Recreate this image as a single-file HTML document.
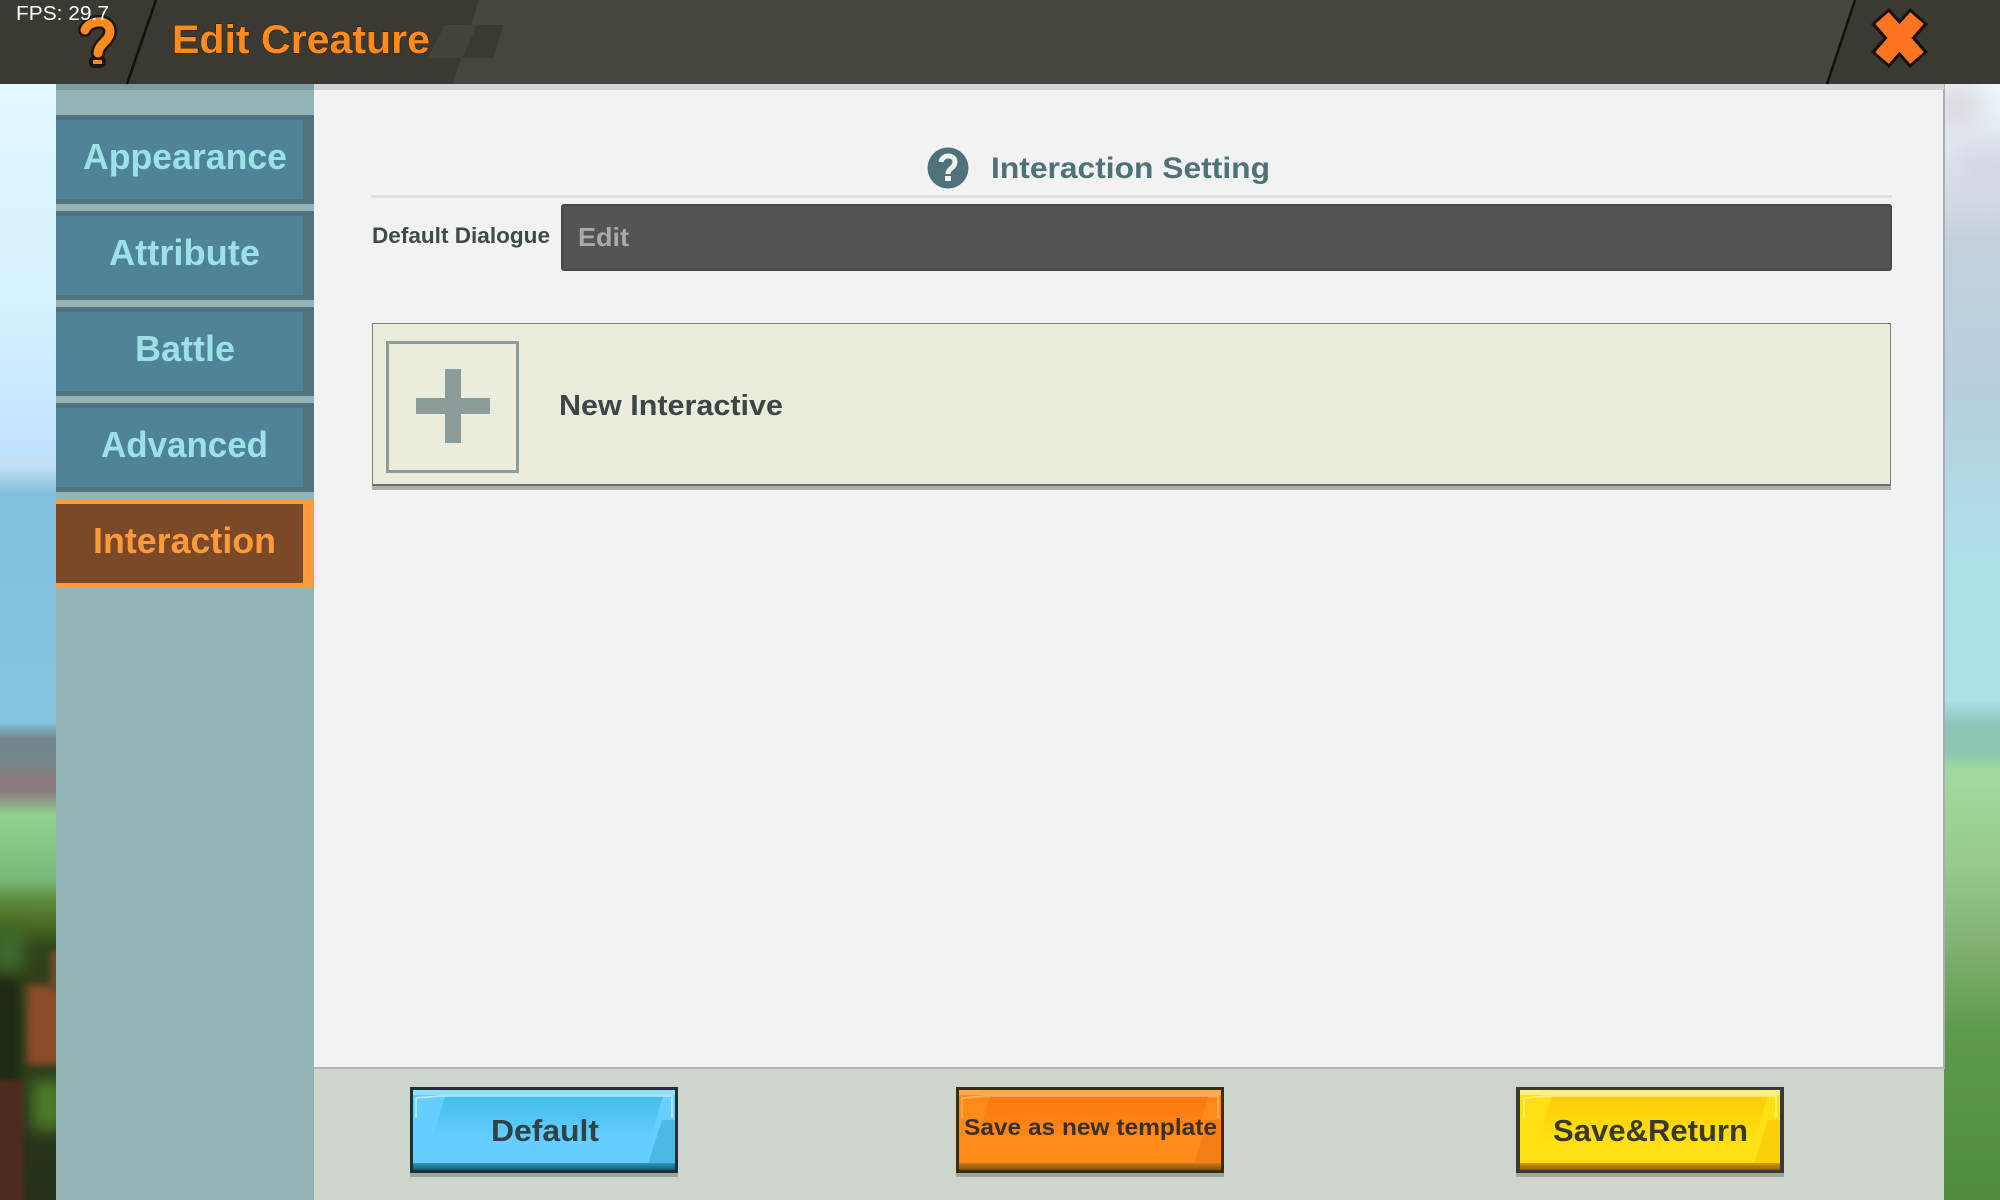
<!DOCTYPE html>
<html><head><meta charset="utf-8">
<style>
html,body{margin:0;padding:0;width:2000px;height:1200px;overflow:hidden;background:#84c5e0}
div{position:absolute;box-sizing:border-box}
svg{position:absolute;left:0;top:0}
text{font-family:"Liberation Sans",sans-serif;font-weight:700}
</style></head><body>
<div id="bgl" style="left:0;top:0;width:56px;height:1200px;overflow:hidden;background:linear-gradient(#e0f8ff 84px,#d6f2ff 300px,#c0e2ff 450px,#c4e0f4 465px,#80bfdc 495px,#84c5e0 722px,#75868a 738px,#76888c 762px,#8a7a7c 778px,#8a7c7c 792px,#90d290 815px,#78b878 880px,#5c8c3c 900px,#4a6a24 925px,#2f4218 950px,#26301a 1200px)">
  <div style="left:-6px;top:925px;width:30px;height:45px;background:#3f6a2c;filter:blur(7px)"></div>
  <div style="left:-6px;top:980px;width:24px;height:100px;background:#1e2a14;filter:blur(4px)"></div>
  <div style="left:27px;top:985px;width:40px;height:80px;background:#8c4c2a;filter:blur(4px)"></div>
  <div style="left:50px;top:950px;width:12px;height:40px;background:#6e4a28;filter:blur(3px)"></div>
  <div style="left:-6px;top:1080px;width:30px;height:130px;background:#4c2a1c;filter:blur(1.5px)"></div>
  <div style="left:32px;top:1080px;width:34px;height:50px;background:#4f7a2a;filter:blur(8px)"></div>
</div>
<div style="left:1944px;top:84px;width:56px;height:1116px;overflow:hidden;background:linear-gradient(#f0f8fc 84px,#e8f0f6 130px,#c4d0da 240px,#b5cfe0 400px,#aee0ea 560px,#aee0e8 700px,#8cc5b8 725px,#8cc8b0 755px,#a0da9f 770px,#98cc8a 860px,#7fb070 950px,#5d9a4c 1030px,#4f8c3e 1200px);background-size:100% 1200px;background-position:0 -84px">
  <div style="left:-10px;top:0;width:46px;height:46px;background:#d8d8de;filter:blur(14px)"></div>
  <div style="left:10px;top:62px;width:70px;height:50px;background:#d4d6e0;filter:blur(16px)"></div>
</div>

<!-- sidebar -->
<div style="left:56px;top:84px;width:258px;height:1116px;background:#94b4b4"></div>
<div style="left:56px;top:84px;width:258px;height:6px;background:#7d9ea0"></div>
<div style="left:56px;top:115px;width:258px;height:89px;background:#50727c"></div>
<div style="left:56px;top:120px;width:247px;height:79px;background:#4f8398"></div>
<div style="left:56px;top:211px;width:258px;height:89px;background:#50727c"></div>
<div style="left:56px;top:216px;width:247px;height:79px;background:#4f8398"></div>
<div style="left:56px;top:307px;width:258px;height:89px;background:#50727c"></div>
<div style="left:56px;top:312px;width:247px;height:79px;background:#4f8398"></div>
<div style="left:56px;top:403px;width:258px;height:89px;background:#50727c"></div>
<div style="left:56px;top:408px;width:247px;height:79px;background:#4f8398"></div>
<div style="left:56px;top:499px;width:259px;height:89px;background:#ff9a38"></div>
<div style="left:56px;top:504px;width:247px;height:79px;background:#7a4a28"></div>

<!-- panel -->
<div style="left:314px;top:84px;width:1631px;height:985px;background:#f2f2f2;border-right:2px solid #a8aeb2;border-bottom:2px solid #b0b8b0"></div>
<div style="left:314px;top:1069px;width:1630px;height:131px;background:#cdd5cd"></div>
<div style="left:314px;top:83px;width:1630px;height:7px;background:#d4d4d4"></div>
<div style="left:371px;top:195px;width:1521px;height:3px;background:#dbe5dc"></div>
<div style="left:561px;top:204px;width:1331px;height:67px;background:#545454;border-radius:3px;border:2px solid #474747"></div>
<div style="left:372px;top:323px;width:1519px;height:167px;background:#b0b0ac"></div>
<div style="left:372px;top:323px;width:1519px;height:163px;background:#ebecdb;border:1px solid #7e7e72;border-bottom:2px solid #6e6e62"></div>
<div style="left:386px;top:341px;width:133px;height:132px;border:3px solid #8c9c9a"></div>
<div style="left:445px;top:369px;width:16px;height:74px;background:#8c9c9a"></div>
<div style="left:416px;top:398px;width:74px;height:16px;background:#8c9c9a"></div>

<!-- header -->
<div style="left:0;top:0;width:2000px;height:84px;background:#3a3a32"></div>
<svg width="2000" height="1200" viewBox="0 0 2000 1200">
  <defs>
    <linearGradient id="gb" x1="0" y1="0" x2="0" y2="1"><stop offset="0" stop-color="#48bdec"/><stop offset=".45" stop-color="#52c4f2"/><stop offset="1" stop-color="#66cfff"/></linearGradient>
    <linearGradient id="go" x1="0" y1="0" x2="0" y2="1"><stop offset="0" stop-color="#fb7a10"/><stop offset=".45" stop-color="#fd8014"/><stop offset="1" stop-color="#ff8a1a"/></linearGradient>
    <linearGradient id="gy" x1="0" y1="0" x2="0" y2="1"><stop offset="0" stop-color="#ffcc06"/><stop offset=".45" stop-color="#ffd40a"/><stop offset="1" stop-color="#ffe012"/></linearGradient>
    <linearGradient id="bb" x1="0" y1="0" x2="0" y2="1"><stop offset="0" stop-color="#2a9cc0"/><stop offset="1" stop-color="#0f5c70"/></linearGradient>
    <linearGradient id="bo" x1="0" y1="0" x2="0" y2="1"><stop offset="0" stop-color="#d07a12"/><stop offset="1" stop-color="#805010"/></linearGradient>
    <linearGradient id="by" x1="0" y1="0" x2="0" y2="1"><stop offset="0" stop-color="#d89a08"/><stop offset="1" stop-color="#8c6008"/></linearGradient>
  </defs>
  <polygon points="479,0 1855,0 1827,84 453,84" fill="#46463e"/>
  <polygon points="445,25 477,25 468,58 428,58" fill="#44443c"/>
  <polygon points="477,25 503,25 494,58 462,58" fill="#3a3a33"/>
  <line x1="156" y1="0" x2="127" y2="84" stroke="#111" stroke-width="2.5"/>
  <line x1="1855" y1="0" x2="1827" y2="84" stroke="#111" stroke-width="2.5"/>

  <!-- question icon -->
  <path d="M85 30 C89 20 109 18 110 31 C110 41 99 43 98 53" fill="none" stroke="#1c1608" stroke-width="14" stroke-linecap="round"/>
  <rect x="91" y="58" width="13" height="8" rx="3" fill="#ff8a1e" stroke="#1c1608" stroke-width="4"/>
  <path d="M85 30 C89 20 109 18 110 31 C110 41 99 43 98 53" fill="none" stroke="#ff8a1e" stroke-width="9" stroke-linecap="round"/>

  <!-- close icon -->
  <path d="M1880 16 L1919 60 M1919 16 L1880 60" stroke="#16100a" stroke-width="24"/>
  <path d="M1882 18 L1917 58 M1917 18 L1882 58" stroke="#ff7420" stroke-width="18"/>

  <!-- help circle -->
  <circle cx="948" cy="168" r="20.5" fill="#4f7178"/>
  <path d="M941 162 C942 154 955 154 955 162 C955 168 948 168 948 174" fill="none" stroke="#f2f2f2" stroke-width="5"/>
  <rect x="945" y="176" width="6" height="5" fill="#f2f2f2"/>

  <!-- buttons -->
  <g>
    <rect x="410" y="1173" width="268" height="4" fill="#9ca49c"/>
    <rect x="410" y="1087" width="268" height="86" fill="#1c3238"/>
    <rect x="413" y="1090" width="262" height="80" fill="#66cfff"/>
    <polygon points="445,1096 663,1096 650,1140 432,1140" fill="url(#gb)"/>
    <polygon points="675,1120 675,1164 648,1164 662,1120" fill="#4cb8e6"/>
    <rect x="413" y="1090" width="262" height="5" fill="#8ee0fc"/>
    <path d="M416 1118 V1098 L440 1096 H672 V1118" fill="none" stroke="#d8f4ff" stroke-width="1.5" opacity=".8"/>
    <rect x="413" y="1163" width="262" height="7" fill="url(#bb)"/>
  </g>
  <g>
    <rect x="956" y="1173" width="268" height="4" fill="#9ca49c"/>
    <rect x="956" y="1087" width="268" height="86" fill="#3c2c14"/>
    <rect x="959" y="1090" width="262" height="80" fill="#ff8a1a"/>
    <polygon points="990,1096 1208,1096 1196,1140 978,1140" fill="url(#go)"/>
    <polygon points="1221,1120 1221,1164 1194,1164 1208,1120" fill="#f57e16"/>
    <rect x="959" y="1090" width="262" height="5" fill="#ffaa48"/>
    <path d="M962 1118 V1098 L985 1096 H1218 V1118" fill="none" stroke="#ffc070" stroke-width="1.5" opacity=".8"/>
    <rect x="959" y="1163" width="262" height="7" fill="url(#bo)"/>
  </g>
  <g>
    <rect x="1516" y="1173" width="268" height="4" fill="#9ca49c"/>
    <rect x="1516" y="1087" width="268" height="86" fill="#3a3a34"/>
    <rect x="1520" y="1090" width="260" height="80" fill="#ffe012"/>
    <polygon points="1552,1096 1768,1096 1755,1140 1538,1140" fill="url(#gy)"/>
    <polygon points="1780,1120 1780,1164 1754,1164 1768,1120" fill="#fad00a"/>
    <rect x="1520" y="1090" width="260" height="5" fill="#fff080"/>
    <path d="M1524 1118 V1098 L1548 1096 H1776 V1118" fill="none" stroke="#fff6a0" stroke-width="1.5" opacity=".85"/>
    <rect x="1520" y="1163" width="260" height="7" fill="url(#by)"/>
  </g>

  <!-- text -->
  <text x="172" y="53" font-size="40" textLength="258" lengthAdjust="spacingAndGlyphs" fill="#ff8a1e" stroke="#2a1c08" stroke-width="1" paint-order="stroke">Edit Creature</text>
  <text x="16" y="20" font-size="20.5" textLength="93" lengthAdjust="spacingAndGlyphs" fill="#fff" style="font-weight:400">FPS: 29.7</text>

  <g font-size="36" fill="#9ce0e8">
    <text x="83" y="169" textLength="204" lengthAdjust="spacingAndGlyphs">Appearance</text>
    <text x="109" y="265" textLength="151" lengthAdjust="spacingAndGlyphs">Attribute</text>
    <text x="135" y="361" textLength="100" lengthAdjust="spacingAndGlyphs">Battle</text>
    <text x="101" y="457" textLength="167" lengthAdjust="spacingAndGlyphs">Advanced</text>
    <text x="93" y="553" textLength="183" lengthAdjust="spacingAndGlyphs" fill="#ff9a3a">Interaction</text>
  </g>

  <text x="991" y="178" font-size="30" textLength="279" lengthAdjust="spacingAndGlyphs" fill="#4f7178">Interaction Setting</text>
  <text x="372" y="243" font-size="22" textLength="178" lengthAdjust="spacingAndGlyphs" fill="#3e4a4c">Default Dialogue</text>
  <text x="578" y="246" font-size="26" textLength="51" lengthAdjust="spacingAndGlyphs" fill="#aaaaaa">Edit</text>
  <text x="559" y="415" font-size="29" textLength="224" lengthAdjust="spacingAndGlyphs" fill="#3c4648">New Interactive</text>

  <text x="491" y="1141" font-size="31" textLength="108" lengthAdjust="spacingAndGlyphs" fill="#2e4248">Default</text>
  <text x="964" y="1135" font-size="23" textLength="253" lengthAdjust="spacingAndGlyphs" fill="#3a3026">Save as new template</text>
  <text x="1553" y="1141" font-size="31" textLength="195" lengthAdjust="spacingAndGlyphs" fill="#3a3a28">Save&amp;Return</text>
</svg>
</body></html>
